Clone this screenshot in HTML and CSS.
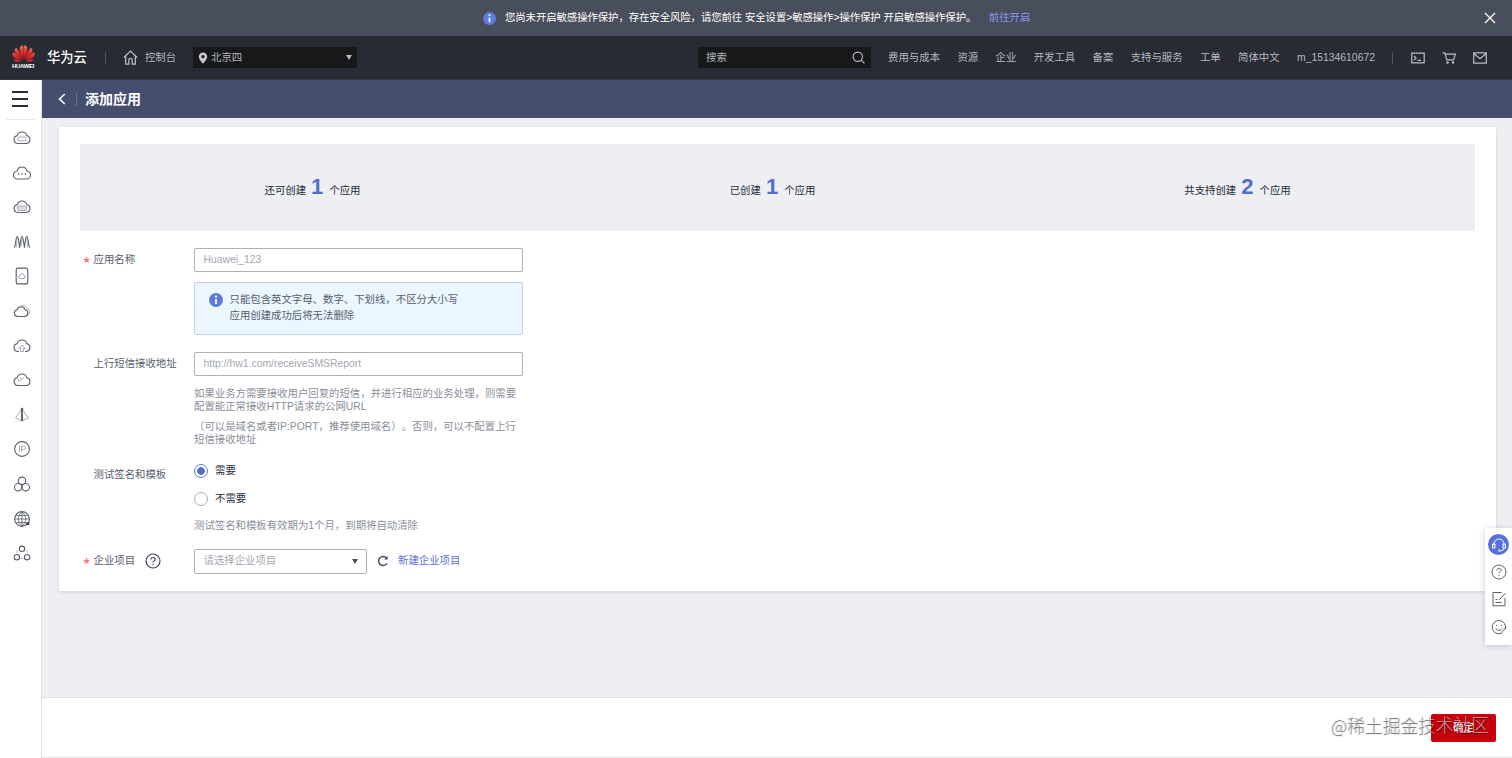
FILE: index.html
```html
<!DOCTYPE html>
<html lang="zh-CN">
<head>
<meta charset="utf-8">
<title>添加应用</title>
<meta name="viewport" content="width=device-width,initial-scale=1.0">
<link rel="stylesheet" href="styles.css">
</head>
<body>

<!-- ===== 安全提示 ===== -->
<div class="notice">
  <svg class="info-icon" viewBox="0 0 14 14"><circle cx="7" cy="7" r="7" fill="#5e7ce0"/><path d="M7 6v5" stroke="#fff" stroke-width="1.8"/><circle cx="7" cy="3.6" r="1.1" fill="#fff"/></svg>
  <span class="notice-text">您尚未开启敏感操作保护，存在安全风险，请您前往 安全设置&gt;敏感操作&gt;操作保护 开启敏感操作保护。</span>
  <a class="notice-link">前往开启</a>
  <svg class="notice-close" viewBox="0 0 12 12"><path d="M1 1l10 10M11 1L1 11"/></svg>
</div>

<!-- ===== 顶部导航 ===== -->
<header class="topbar">
  <div class="logo">
    <svg viewBox="0 0 24 18" preserveAspectRatio="none">
      <defs><linearGradient id="petal" x1="0" y1="0" x2="0" y2="1"><stop offset="0" stop-color="#f0806a"/><stop offset=".4" stop-color="#e2322c"/><stop offset="1" stop-color="#c4121a"/></linearGradient></defs>
      <g fill="url(#petal)">
        <path d="M11.6 15.5C8.5 9.5 7.3 5 8.4 2.2 9.1.8 10.3.4 11.3.3c.7 2.2.9 9.5.3 15.2z"/>
        <path d="M12.4 15.5c3.1-6 4.3-10.5 3.2-13.3C14.9.8 13.7.4 12.7.3c-.7 2.2-.9 9.5-.3 15.2z"/>
        <path d="M10.6 15.5C9.4 10.5 6.9 5.8 4.3 2.9 2.6 4 2.3 5.9 3.1 7.8c1 2.5 3.9 5.3 7.5 7.7z"/>
        <path d="M13.4 15.5c1.2-5 3.7-9.7 6.3-12.6 1.7 1.1 2 3 1.2 4.9-1 2.5-3.9 5.3-7.5 7.7z"/>
        <path d="M9.9 16C7.6 12.8 3.9 9.3.9 7.7c-.8 2.1-.4 3.9 1 5.2C3.6 14.4 6 15.6 9.9 16z"/>
        <path d="M14.1 16c2.3-3.2 6-6.7 9-8.3.8 2.1.4 3.9-1 5.2-1.7 1.5-4.1 2.7-8 3.1z"/>
        <path d="M9.5 16.6c-3-.8-5.5-1.2-8-1.3.9 2 2.4 2.7 4.2 2.5 1.5-.2 2.7-.6 3.8-1.2z"/>
        <path d="M14.5 16.6c3-.8 5.5-1.2 8-1.3-.9 2-2.4 2.7-4.2 2.5-1.5-.2-2.7-.6-3.8-1.2z"/>
      </g>
    </svg>
    <span class="logo-name">HUAWEI</span>
  </div>
  <span class="brand">华为云</span>
  <i class="divider"></i>
  <a class="console">
    <svg class="line-icon" viewBox="0 0 14 14"><path d="M.8 7L7 1l6.2 6M2.5 5.6v7.6h2.9V9.5a1.6 1.6 0 0 1 3.2 0v3.7h2.9V5.6"/></svg>
    控制台
  </a>
  <div class="region">
    <svg class="pin" viewBox="0 0 10 12"><path fill-rule="evenodd" d="M5 .5a4.2 4.2 0 0 1 4.2 4.2C9.2 7.5 5 11.7 5 11.7S.8 7.5.8 4.7A4.2 4.2 0 0 1 5 .5zm0 2.6a1.6 1.6 0 1 0 0 3.2 1.6 1.6 0 0 0 0-3.2z"/></svg>
    <span>北京四</span>
    <i class="caret"></i>
  </div>

  <div class="search">
    <span>搜索</span>
    <svg class="line-icon" viewBox="0 0 14 14"><circle cx="6.2" cy="6.2" r="5"/><path d="M9.8 9.8l3.6 3.6"/></svg>
  </div>
  <nav class="menu">
    <a>费用与成本</a>
    <a>资源</a>
    <a>企业</a>
    <a>开发工具</a>
    <a>备案</a>
    <a>支持与服务</a>
    <a>工单</a>
    <a>简体中文</a>
    <a>m_15134610672</a>
  </nav>
  <i class="divider"></i>
  <div class="tools">
    <svg class="line-icon" viewBox="0 0 14 12"><path d="M.8 1.2h12.4v9.6H.8zM3 4l2 2-2 2M6.5 8.3h3.5"/></svg>
    <svg class="line-icon" viewBox="0 0 14 12"><path d="M.5.8h2.3l2 7h6.8l1.7-5.6H3.500"/><circle cx="5.5" cy="10.5" r=".7"/><circle cx="11" cy="10.5" r=".7"/></svg>
    <svg class="line-icon" viewBox="0 0 14 12"><path d="M.7.9h12.6v10.3H.7zM.9 1.5L7 6.6l6.1-5.1"/></svg>
  </div>
</header>

<div class="layout">
  <!-- ===== 左侧服务栏 ===== -->
  <aside class="sidebar">
    <div class="burger"><i></i><i></i><i></i></div>
    <div class="services">
      <svg viewBox="0 0 18 16"><path d="M5 13.5a4 4 0 0 1-.8-7.9 5 5 0 0 1 9.6 0 4 4 0 0 1-.8 7.9z"/><rect class="thin" x="5" y="7" width="8" height="4" rx="1"/></svg>
      <svg viewBox="0 0 18 16"><path d="M4.8 14a4 4 0 0 1-.7-8 5 5 0 0 1 9.8 0 4 4 0 0 1-.7 8z"/><path class="dots" d="M5 9h1.200M8.400 9h1.200M11.800 9H13"/></svg>
      <svg viewBox="0 0 18 16"><path d="M5 13.5a4 4 0 0 1-.8-7.9 5 5 0 0 1 9.6 0 4 4 0 0 1-.8 7.9z"/><rect class="thin shade" x="4.5" y="7" width="9" height="4.5" rx="1"/></svg>
      <svg viewBox="0 0 18 16"><path d="M1.2 13.5C2.9 12 2.6 2.5 4.3 2.5S5.600 12 7 13.5M6 13.5C7.700 12 7.3 2.5 9 2.5s1.3 9.5 3 11M11 13.5c1.4-1.500 1-11 2.700-11s1.400 9.500 3.100 11"/><path class="thin" d="M3 13.500c.8-2 .5-9 2-9.500M7.600 13C8.800 10 8 6 9.800 4M15 13.500c-.8-2-.5-9-2-9.500"/></svg>
      <svg viewBox="0 0 18 16"><rect x="3.2" y=".1" width="11.6" height="15.800" rx="2"/><path class="thin" d="M7 10.5a1.400 1.400 0 0 1 0-2.800 2 2 0 0 1 4 0 1.400 1.400 0 0 1 0 2.800z"/></svg>
      <svg viewBox="0 0 18 16"><path d="M4.5 13.5a3.400 3.400 0 0 1-.5-6.700 4.300 4.300 0 0 1 8.200 0 3.400 3.400 0 0 1-.5 6.700z"/><path class="thin" d="M6.500 4.200c2-2.800 6.800-2 7.600 1.600 3.600.9 3.600 5.500-.4 7"/></svg>
      <svg viewBox="0 0 18 16"><path d="M6 13.5H5a4 4 0 0 1-.8-7.900 5 5 0 0 1 9.600 0 4 4 0 0 1-.8 7.900h-1"/><path class="thin" d="M7.500 13.500v-3H5.800L9 7l3.200 3.500h-1.700v3z"/></svg>
      <svg viewBox="0 0 18 16"><path d="M5 13.5a4 4 0 0 1-.8-7.900 5 5 0 0 1 9.600 0 4 4 0 0 1-.8 7.900z"/><path class="thin" d="M4.800 6.500l1.700 2.800L11 4.800M7 6.300h1.200"/></svg>
      <svg viewBox="0 0 18 16"><path class="thin" d="M9 2L2.500 11 9 14l6.500-3z"/><path class="bold" d="M9 1.500V14"/><circle cx="9" cy="2" r=".8"/></svg>
      <svg viewBox="0 0 18 16"><circle cx="9" cy="8" r="7.4"/><path class="thin" d="M6.500 5v6M8.500 11V5h2a1.800 1.800 0 0 1 0 3.600h-2"/></svg>
      <svg viewBox="0 0 18 16"><circle cx="9" cy="4.8" r="3.7"/><circle cx="5.2" cy="11.2" r="3.7"/><circle cx="12.8" cy="11.2" r="3.7"/></svg>
      <svg viewBox="0 0 18 16"><circle cx="9" cy="8" r="7.4"/><path class="mid" d="M2 8h14M3.200 4.500h11.600M3.200 11.500h11.600M9 1v14M9 1c-5 4-5 10 0 14M9 1c5 4 5 10 0 14"/><path class="bold" d="M12.800 13.500l2.700-1.500v2"/></svg>
      <svg viewBox="0 0 18 16"><circle cx="9" cy="3.8" r="2.7"/><circle cx="3.9" cy="12.2" r="2.7"/><circle cx="14.1" cy="12.2" r="2.7"/><path class="thin" d="M4.500 5.500L3.300 7.600M13.500 5.500l1.200 2.100M8 13.500h2"/></svg>
    </div>
  </aside>

  <main class="main">
    <div class="page-title">
      <svg viewBox="0 0 8 12"><path d="M6.8 1L1.6 6l5.2 5"/></svg>
      <i></i>
      <h1>添加应用</h1>
    </div>

    <section class="card">
      <div class="quota">
        <div>还可创建<b>1</b>个应用</div>
        <div>已创建<b>1</b>个应用</div>
        <div>共支持创建<b>2</b>个应用</div>
      </div>

      <!-- 应用名称 -->
      <div class="row row-name">
        <label class="label required">应用名称</label>
        <div class="field">
          <div class="input">Huawei_123</div>
          <div class="tip">
            <svg class="info-icon" viewBox="0 0 14 14"><circle cx="7" cy="7" r="7" fill="#5e7ce0"/><path d="M7 6v5" stroke="#fff" stroke-width="1.8"/><circle cx="7" cy="3.6" r="1.1" fill="#fff"/></svg>
            <p>只能包含英文字母、数字、下划线，不区分大小写<br>应用创建成功后将无法删除</p>
          </div>
        </div>
      </div>

      <!-- 上行短信接收地址 -->
      <div class="row row-url">
        <label class="label">上行短信接收地址</label>
        <div class="field">
          <div class="input">http://hw1.com/receiveSMSReport</div>
          <p class="help">如果业务方需要接收用户回复的短信，并进行相应的业务处理，则需要配置能正常接收HTTP请求的公网URL</p>
          <p class="help">（可以是域名或者IP:PORT，推荐使用域名）。否则，可以不配置上行短信接收地址</p>
        </div>
      </div>

      <!-- 测试签名和模板 -->
      <div class="row row-test">
        <label class="label">测试签名和模板</label>
        <div class="field">
          <div class="radio checked"><i></i>需要</div>
          <div class="radio"><i></i>不需要</div>
          <p class="note">测试签名和模板有效期为1个月，到期将自动清除</p>
        </div>
      </div>

      <!-- 企业项目 -->
      <div class="row row-project">
        <label class="label required">企业项目
          <svg class="question" viewBox="0 0 16 16"><circle cx="8" cy="8" r="7"/><path d="M5.9 6.5c0-2.700 4.300-2.600 4.200-.1 0 1.500-2.100 1.500-2.100 3.200M8 10.800v1.200"/></svg>
        </label>
        <div class="project">
          <div class="select">请选择企业项目<i class="caret"></i></div>
          <svg class="refresh" viewBox="0 0 12 12"><path d="M10 8.300A4.500 4.500 0 1 1 9.500 3"/><path class="tip-arrow" d="M10.600 1v3.600H7.200z"/></svg>
          <a>新建企业项目</a>
        </div>
      </div>
    </section>

    <footer class="actions">
      <button class="submit">确定</button>
      <span class="watermark">@稀土掘金技术社区</span>
    </footer>
  </main>
</div>

<!-- ===== 右侧悬浮工具 ===== -->
<div class="float-tools">
  <div class="service-btn">
    <svg viewBox="0 0 16 16"><path d="M3 8.500V7a5 5 0 0 1 10 0v1.500M3 7H1.500v4H4V7zM13 7h1.500v4H12V7zM13 11c0 2-1.500 2.600-3.500 2.600"/><circle cx="8.500" cy="13.600" r=".9"/></svg>
  </div>
  <svg viewBox="0 0 16 16"><circle cx="8" cy="8" r="7"/><path d="M5.900 6.300c0-2.700 4.300-2.600 4.200-.1 0 1.500-2.100 1.500-2.100 3.200M8 10.800v1.200"/></svg>
  <svg viewBox="0 0 16 16"><path d="M10.500 1.500H2v13.300h12V7M4.500 8.500h2M4.500 11.500h6M8 9l6.500-7"/></svg>
  <svg viewBox="0 0 16 16"><path d="M10.500 14.300A6.700 6.700 0 1 1 14.300 10M5.500 5.800v1M10.500 5.800v1M4.800 9.500c1.500 2.300 4.900 2.300 6.400 0M10.500 14.300c.5-2 2-3.500 3.800-4.300l1-2"/></svg>
</div>

</body>
</html>
```
FILE: styles.css
```css
/* ==== 共通 ==== */
*,*::before,*::after{box-sizing:border-box;margin:0;padding:0}
html,body{width:100%;height:100%;overflow:hidden}
body{
	display:flex;flex-direction:column;
	font-family:"Liberation Sans","Noto Sans CJK SC",sans-serif;
	font-size:10.4px;line-height:16px;color:#575d6c;background:#eeeff3;
	text-spacing-trim:space-all;
}
svg{display:block;flex:none;fill:none;overflow:visible}
a{color:#5a6fdc;white-space:nowrap}
.info-icon{width:14px;height:14px}
.caret{
	width:0;height:0;
	border:3.5px solid transparent;border-top:5px solid #464c59;border-bottom:0;
}

/* ==== 安全提示 ==== */
.notice{
	flex:none;height:36px;
	display:flex;align-items:center;padding-left:483px;
	background:#484e5b;color:#fff;
}
.notice .info-icon{width:13px;height:13px}
.notice-text{margin-left:9px;white-space:nowrap;letter-spacing:-.08px}
.notice-link{margin-left:12.5px;color:#8b93f0}
.notice-close{width:12px;height:12px;margin-left:auto;margin-right:16px;stroke:#fff;stroke-width:1.3}

/* ==== 顶部导航 ==== */
.topbar{
	flex:none;height:44px;padding:0 25px 0 11px;
	display:flex;align-items:center;
	background:#282b33;border-bottom:1px solid #353a47;color:#b4b7be;
}
.topbar a{color:inherit}
.line-icon{stroke:#b9bcc2;stroke-width:1.2}
.logo{width:24px;display:flex;flex-direction:column;align-items:center}
.logo svg{width:23px;height:17px}
.logo-name{margin-top:1px;font-size:6px;line-height:7px;font-weight:bold;color:#fff;letter-spacing:-.3px}
.brand{margin-left:12px;font-size:13.3px;font-weight:500;color:#fff;white-space:nowrap}
.divider{width:1px;height:12px;background:#50545e;margin-left:18px}
.console{display:flex;align-items:center;gap:7px;margin-left:17px}
.console .line-icon{width:15px;height:15px}
.region{
	width:164px;height:21px;margin-left:17px;padding:0 5px 0 5px;
	display:flex;align-items:center;gap:3px;background:#17181a;
}
.pin{width:10px;height:12px;fill:#c5c7cb}
.region .caret{margin-left:auto;border-top-color:#b4b7be}
.search{
	width:173px;height:21px;margin-left:auto;padding:0 6px 0 8px;
	display:flex;align-items:center;justify-content:space-between;background:#17181a;
}
.search .line-icon{width:13px;height:13px}
.menu{display:flex;gap:17.35px;margin-left:17px}
.menu + .divider{margin-left:17px}
.tools{display:flex;gap:17px;margin-left:18px}
.tools svg{width:14px;height:12px}

/* ==== 左侧服务栏 ==== */
.layout{flex:1;display:flex;min-height:0}
.sidebar{width:42px;flex:none;background:#fff;border-right:1px solid #dfe1e6}
.burger{
	height:40px;margin:0 6px;padding:11px 7px 0 6px;
	display:flex;flex-direction:column;gap:5px;border-bottom:1px solid #e6e7ea;
}
.burger i{height:2px;background:#252b3a;width:16px}
.services{display:flex;flex-direction:column;align-items:center;gap:18.6px;padding:10px 0 0 2px}
.services svg{width:18px;height:16px;stroke:#5b5f69;stroke-width:1.1}
.services .thin{stroke:#92959d;stroke-width:.8}
.services .shade{fill:#dcdde0}
.services .mid{stroke-width:.8}
.services .bold{stroke:#353945;stroke-width:1.5}
.services .dots{stroke-width:1.5}

/* ==== 页面标题 ==== */
.main{flex:1;display:flex;flex-direction:column;min-width:0}
.page-title{
	flex:none;height:38px;padding-left:16px;
	display:flex;align-items:center;background:#464e6e;color:#fff;
}
.page-title svg{width:8px;height:12px;stroke:#fff;stroke-width:1.6}
.page-title i{width:1px;height:13px;margin:0 8px 0 10px;background:#6a7190}
.page-title h1{font-size:14px;font-weight:bold}

/* ==== 表单卡片 ==== */
.card{
	margin:9px 16px 0 17px;height:464px;padding:17px 21px 0;
	background:#fff;box-shadow:0 1px 3px rgba(40,50,80,.14);
}
.quota{height:87px;display:grid;grid-template-columns:repeat(3,1fr);background:#eeeff3;color:#252b3a}
.quota div{display:flex;align-items:baseline;justify-content:center;padding-top:35px}
.quota div + div{padding-right:10px}
.quota b{margin:0 6px 0 5px;font-size:22px;line-height:16px;color:#526ecc}

.row{display:flex;align-items:flex-start}
.label{position:relative;width:114px;flex:none;padding-left:13.5px;line-height:24px;display:flex;align-items:center;white-space:nowrap}
/* 必填星号 */
.required::before{content:"*";position:absolute;left:2.5px;top:3px;font-family:"Noto Sans CJK SC",sans-serif;font-size:18px;color:#f66f6a}
.field{width:329px}
.input,.select{
	height:24px;padding:0 9px 0 8.5px;line-height:22px;
	border:1px solid #adb0b8;border-radius:2px;background:#fff;color:#a5a8b0;
}
.row-name{margin-top:17px}
.tip{
	height:53px;margin-top:10px;padding:9px 14px;display:flex;gap:6.5px;
	background:#ebf6ff;border:1px solid #bed0f6;border-radius:2px;
}
.tip .info-icon{margin-top:1px}
.tip p{line-height:16px}
.row-url{margin-top:17px}
.help{line-height:13.3px;color:#8a8e99}
.input + .help{margin-top:11px}
.help + .help{margin-top:6.5px}
.row-test{margin-top:16px}
.radio{display:flex;align-items:center;height:16px;gap:7px;color:#252b3a}
.radio + .radio{margin-top:12px}
.radio i{width:14px;height:14px;border:1px solid #adb0b8;border-radius:50%}
.radio.checked i{border-color:#5e7ce0;background:radial-gradient(circle,#526ecc 3.5px,#fff 4px)}
.note{margin-top:11px;color:#8a8e99}
.row-project{margin-top:15px}
.question{width:16px;height:16px;margin-left:10px;stroke:#454a57;stroke-width:1.2}
.project{display:flex;align-items:center}
.select{width:173px;height:25px;display:flex;align-items:center;justify-content:space-between;padding-right:8px}
.refresh{width:12px;height:12px;margin:0 9px 0 10px;stroke:#454a57;stroke-width:1.4}
.refresh .tip-arrow{fill:#454a57;stroke:none}

/* ==== 底部操作 ==== */
.actions{
	position:relative;height:61px;margin-top:auto;padding:16px 16px 0;
	display:flex;justify-content:flex-end;
	background:#fff;border-top:1px solid #dcdee3;border-bottom:1px solid #e3e4e8;
}
.submit{
	width:65px;height:28px;border:0;border-radius:2px;
	background:#c7000b;color:#fff;font:inherit;font-weight:500;
}
.watermark{
	position:absolute;right:23px;top:14px;
	font-size:17.8px;line-height:24px;white-space:nowrap;
	font-family:"Noto Sans CJK SC",sans-serif;font-weight:300;
	color:rgba(255,255,255,.6);text-shadow:.5px .5px 1px rgba(0,0,0,.75);
}

/* ==== 右侧悬浮工具 ==== */
.float-tools{
	position:fixed;right:0;top:528px;width:27px;height:117px;
	display:flex;flex-direction:column;align-items:center;gap:11.5px;padding-top:6px;
	background:#fff;box-shadow:0 1px 6px rgba(40,50,80,.22);
}
.float-tools svg{width:16px;height:16px;stroke:#5b5f69;stroke-width:1}
.float-tools .service-btn{
	width:21px;height:21px;margin-bottom:-3px;border-radius:50%;
	display:flex;align-items:center;justify-content:center;background:#5672d8;
}
.float-tools .service-btn svg{stroke:#fff}
```
